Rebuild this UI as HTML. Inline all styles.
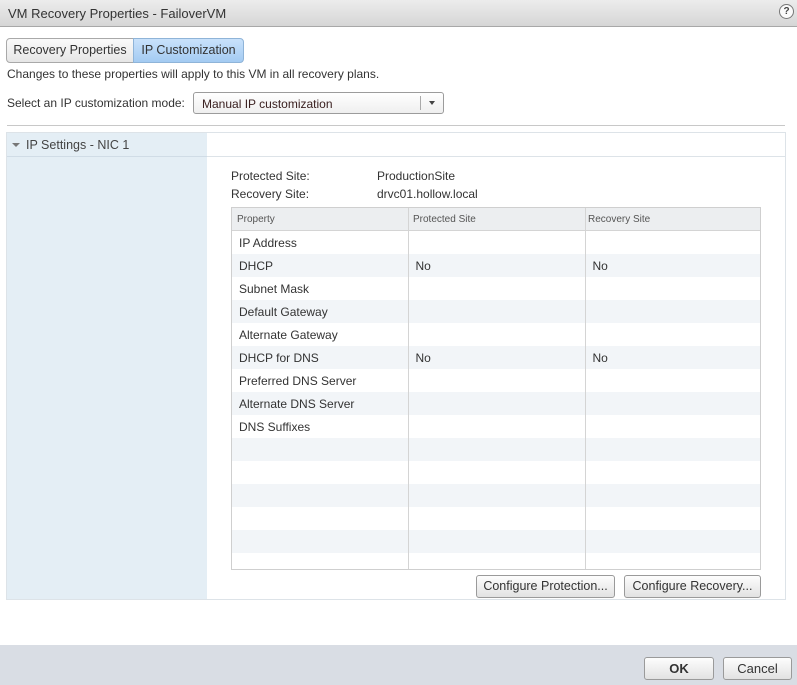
<!DOCTYPE html>
<html><head><style>
*{box-sizing:border-box;margin:0;padding:0}
body{width:797px;height:685px;position:relative;background:#fff;font-family:"Liberation Sans",Arial,sans-serif;font-size:12px;color:#333;overflow:hidden}
.abs{position:absolute}
.title{left:0;top:0;width:797px;height:27px;background:linear-gradient(#ececec,#d6d6d6);border-bottom:1px solid #a8a8a8;font-size:13px;color:#333;padding:6px 0 0 8px}
.help{right:3px;top:4px;width:15px;height:15px;border:1px solid #777;border-radius:50%;font-size:10px;text-align:center;line-height:13px;font-weight:bold;color:#444;background:#fafafa}
.tab{top:38px;height:25px;border:1px solid #a9a9a9;font-size:12.5px;line-height:23px;text-align:center}
.btn{border:1px solid #9a9a9a;border-radius:3px;background:linear-gradient(#fdfdfd,#e2e2e2);text-align:center;font-size:12.5px;color:#333}
table{border-collapse:collapse;width:529px;table-layout:fixed}
td{height:23px;padding-left:7px;font-size:12px;border-left:1px solid #d4d4d4}
td:first-child{border-left:none}
tr:nth-child(even) td{background:#f2f5f8}
</style></head><body>
<div class="abs title">VM Recovery Properties - FailoverVM</div>
<div class="abs help">?</div>
<div class="abs tab" style="left:6px;width:128px;border-radius:4px 0 0 4px;background:linear-gradient(#fafafa,#e6e6e6)">Recovery Properties</div>
<div class="abs tab" style="left:133px;width:111px;border-radius:0 4px 4px 0;background:linear-gradient(#c9e2fb,#a3cbf2);border-color:#8fb4d8">IP Customization</div>
<div class="abs" style="left:7px;top:67px">Changes to these properties will apply to this VM in all recovery plans.</div>
<div class="abs" style="left:7px;top:96px">Select an IP customization mode:</div>
<div class="abs" style="left:193px;top:92px;width:251px;height:22px;border:1px solid #9c9c9c;border-radius:3px;background:linear-gradient(#fff,#efefef);padding:4px 0 0 8px;color:#3a2020">Manual IP customization
<div class="abs" style="left:226px;top:3px;width:1px;height:14px;background:#aaa"></div>
<div class="abs" style="left:235px;top:8px;border-left:3px solid transparent;border-right:3px solid transparent;border-top:4px solid #444"></div></div>
<div class="abs" style="left:7px;top:125px;width:778px;height:1px;background:#c8c8c8"></div>
<div class="abs" style="left:6px;top:132px;width:780px;height:468px;border:1px solid #dde3e8"></div>
<div class="abs" style="left:7px;top:133px;width:200px;height:466px;background:#e4eef5"></div>
<div class="abs" style="left:207px;top:156px;width:578px;height:1px;background:#dde3e8"></div>
<div class="abs" style="left:7px;top:156px;width:200px;height:1px;background:#d0dce6"></div>
<div class="abs" style="left:12px;top:143px;border-left:4px solid transparent;border-right:4px solid transparent;border-top:4px solid #777"></div>
<div class="abs" style="left:26px;top:138px;font-size:12.5px;color:#444">IP Settings - NIC 1</div>
<div class="abs" style="left:231px;top:169px">Protected Site:</div>
<div class="abs" style="left:377px;top:169px">ProductionSite</div>
<div class="abs" style="left:231px;top:187px">Recovery Site:</div>
<div class="abs" style="left:377px;top:187px">drvc01.hollow.local</div>
<div class="abs" style="left:231px;top:207px;width:530px;height:363px;border:1px solid #cfcfcf;overflow:hidden">
<div style="height:23px;background:#eceef0;border-bottom:1px solid #d4d4d4;font-size:10px;color:#555;position:relative">
<span class="abs" style="left:5px;top:6px">Property</span><span class="abs" style="left:181px;top:6px">Protected Site</span><span class="abs" style="left:356px;top:6px">Recovery Site</span>
<div class="abs" style="left:176px;top:0;width:1px;height:23px;background:#d4d4d4"></div><div class="abs" style="left:353px;top:0;width:1px;height:23px;background:#d4d4d4"></div></div>
<table>
<colgroup><col style="width:176px"><col style="width:177px"><col></colgroup>
<tr><td>IP Address</td><td></td><td></td></tr>
<tr><td>DHCP</td><td>No</td><td>No</td></tr>
<tr><td>Subnet Mask</td><td></td><td></td></tr>
<tr><td>Default Gateway</td><td></td><td></td></tr>
<tr><td>Alternate Gateway</td><td></td><td></td></tr>
<tr><td>DHCP for DNS</td><td>No</td><td>No</td></tr>
<tr><td>Preferred DNS Server</td><td></td><td></td></tr>
<tr><td>Alternate DNS Server</td><td></td><td></td></tr>
<tr><td>DNS Suffixes</td><td></td><td></td></tr>
<tr><td></td><td></td><td></td></tr><tr><td></td><td></td><td></td></tr><tr><td></td><td></td><td></td></tr><tr><td></td><td></td><td></td></tr><tr><td></td><td></td><td></td></tr><tr><td></td><td></td><td></td></tr><tr><td></td><td></td><td></td></tr>
</table></div>
<div class="abs btn" style="left:476px;top:575px;width:139px;height:23px;line-height:21px">Configure Protection...</div>
<div class="abs btn" style="left:624px;top:575px;width:137px;height:23px;line-height:21px">Configure Recovery...</div>
<div class="abs" style="left:0;top:645px;width:797px;height:40px;background:#d9dde4"></div>
<div class="abs btn" style="left:644px;top:657px;width:70px;height:23px;line-height:21px;font-weight:bold;font-size:13px">OK</div>
<div class="abs btn" style="left:723px;top:657px;width:69px;height:23px;line-height:21px;font-size:13px">Cancel</div>
</body></html>
